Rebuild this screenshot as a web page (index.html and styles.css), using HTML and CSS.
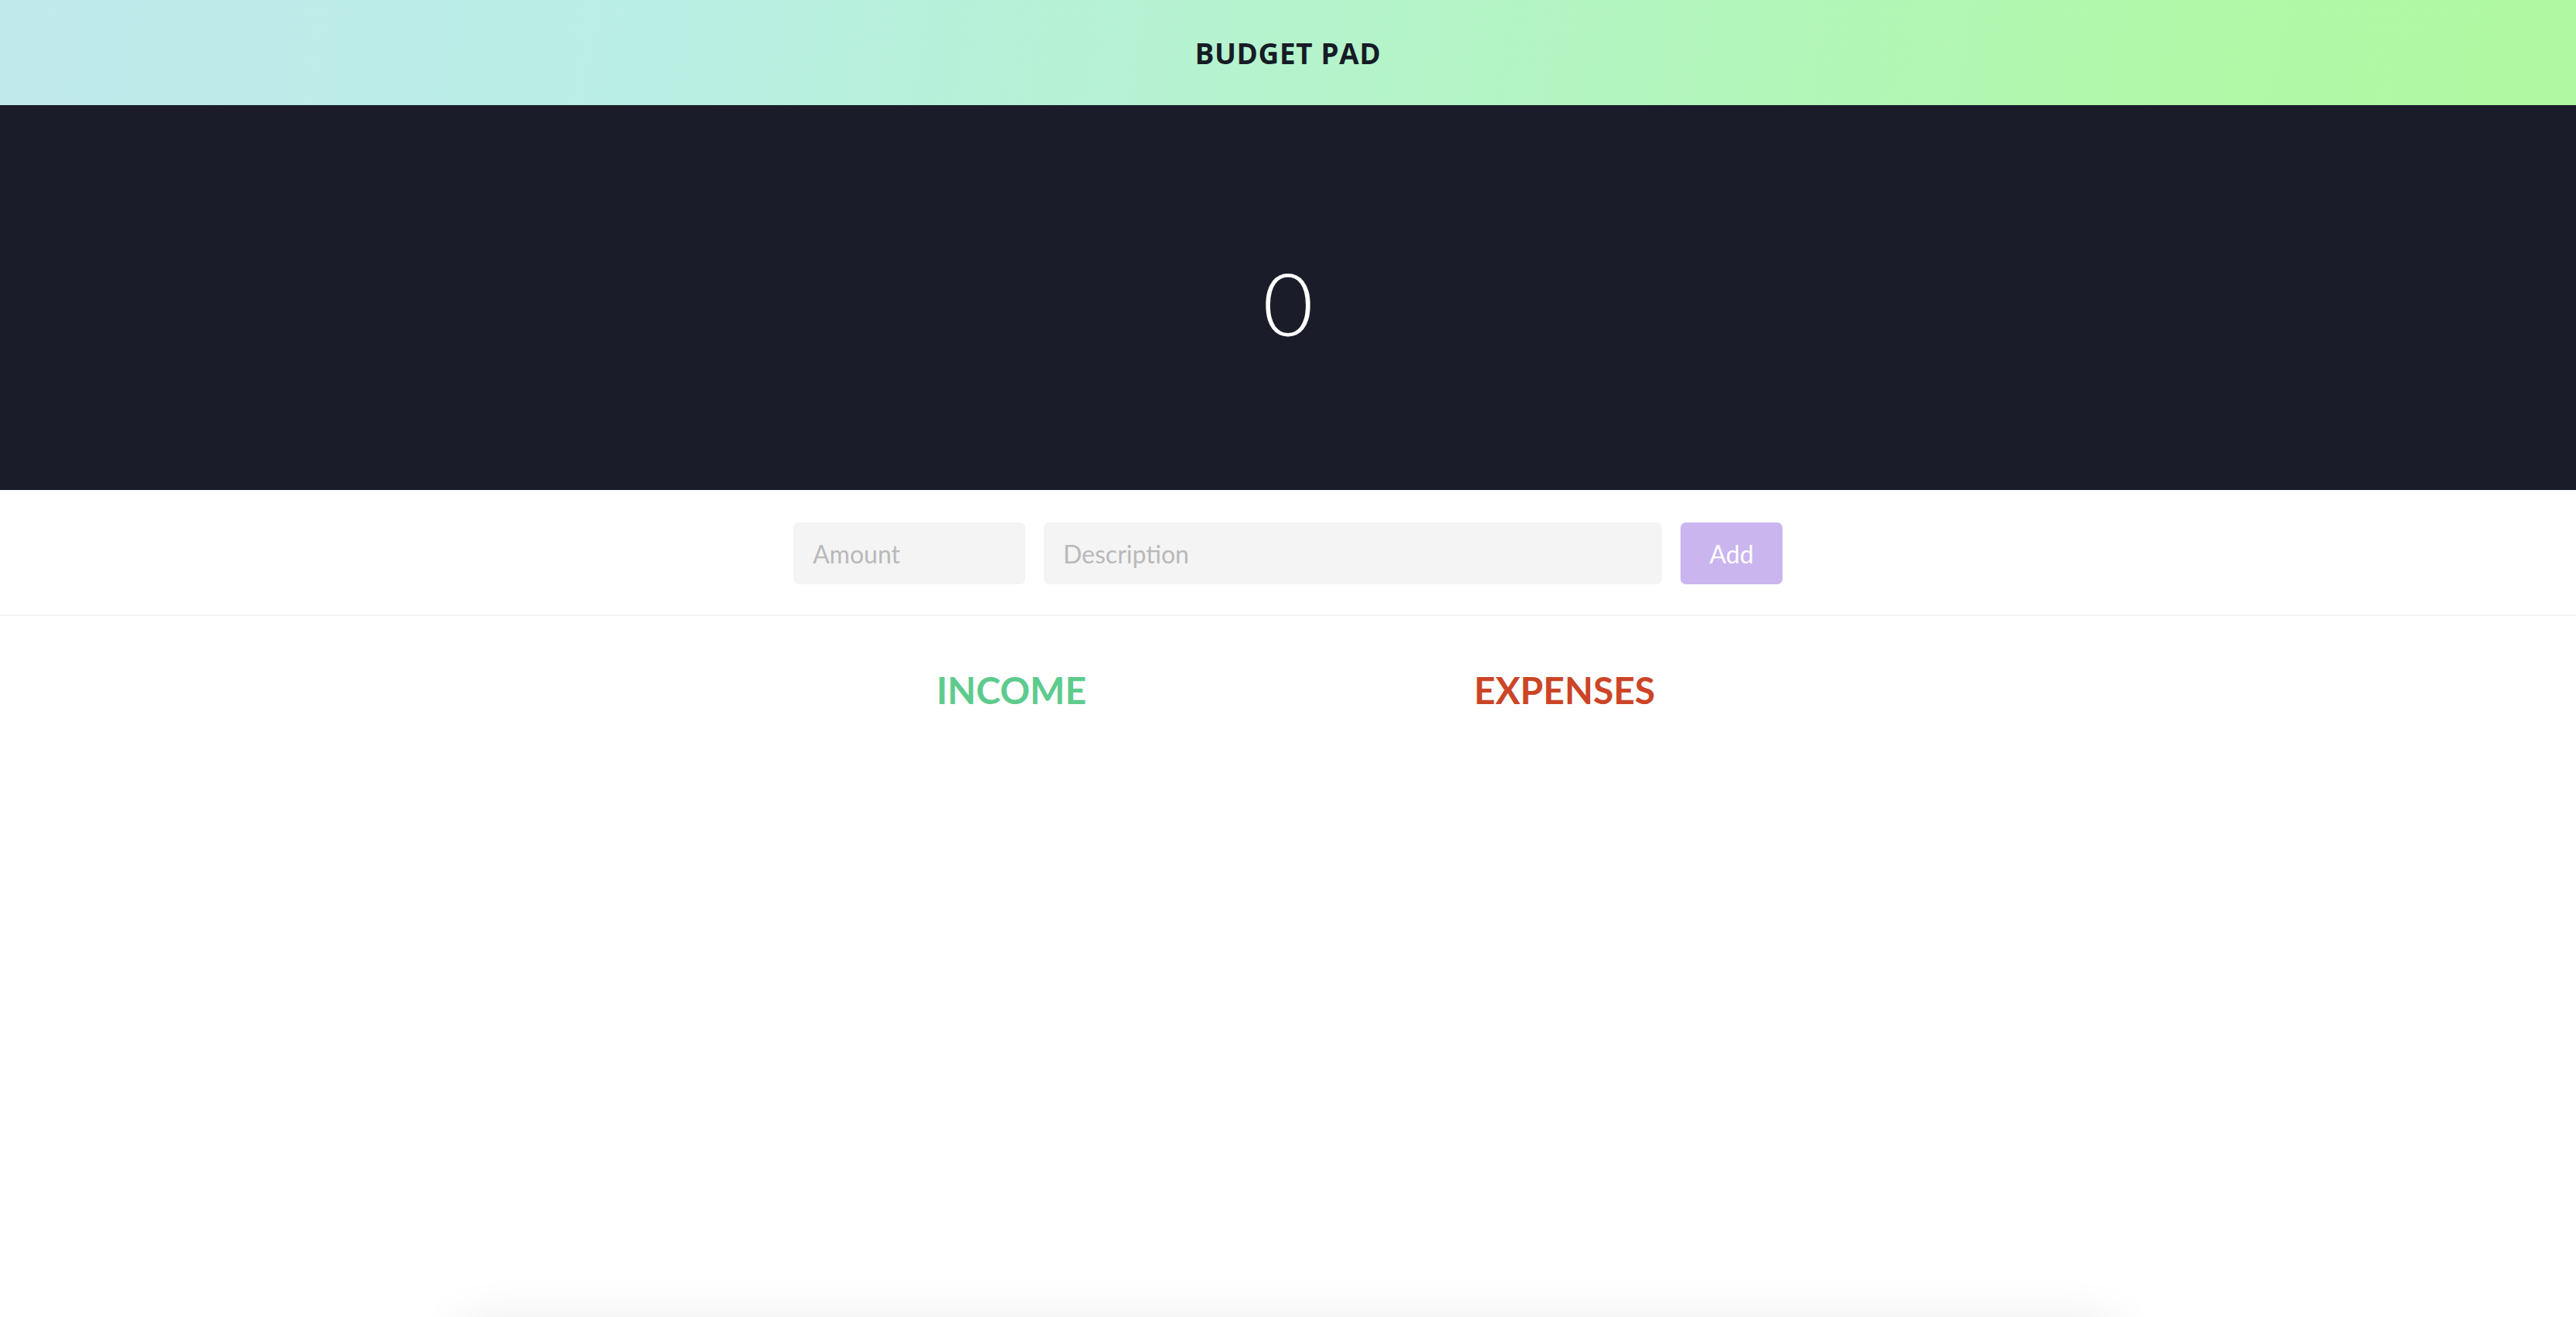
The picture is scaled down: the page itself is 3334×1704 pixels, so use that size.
FILE: index.html
```html
<!DOCTYPE html>
<html lang="en">
<head>
<meta charset="utf-8">
<title>Budget Pad</title>
<link rel="stylesheet" href="styles.css">
</head>
<body>
<header class="topbar">
  <h1 class="brand">BUDGET PAD</h1>
</header>
<section class="balance">
  <div class="balance-value">0</div>
</section>
<section class="entry">
  <form class="entry-form">
    <input class="field field-amount" type="text" placeholder="Amount">
    <input class="field field-desc" type="text" placeholder="Description">
    <button class="add-btn" type="button">Add</button>
  </form>
</section>
<main class="lists">
  <div class="list-col">
    <h2 class="list-title income">INCOME</h2>
  </div>
  <div class="list-col">
    <h2 class="list-title expenses">EXPENSES</h2>
  </div>
</main>
<div class="card"></div>
</body>
</html>
```

FILE: styles.css
```css
html, body {
  margin: 0;
  padding: 0;
  background: #ffffff;
}

body {
  font-family: "Lato", "Open Sans", sans-serif;
  overflow: hidden;
}

.topbar {
  height: 136px;
  display: flex;
  align-items: center;
  justify-content: center;
  background: linear-gradient(100deg, #c0e9ec 0%, #b9eee5 25%, #b4f4c8 55%, #b1f8a8 85%, #b0f9a1 100%);
}

.brand {
  margin: 0;
  font-family: "Open Sans", sans-serif;
  font-weight: 700;
  font-size: 37px;
  letter-spacing: 0.6px;
  color: #161c26;
}

.balance {
  height: 498px;
  background: #1a1d29;
  display: flex;
  align-items: center;
  justify-content: center;
}

.balance-value {
  font-family: "Lato", sans-serif;
  font-weight: 300;
  font-size: 113px;
  line-height: 1;
  color: #ffffff;
  padding-top: 12px;
}

.entry {
  padding: 42px 0 39px;
  border-bottom: 2px solid #f2f2f2;
}

.entry-form {
  width: 1280px;
  margin: 0 auto;
  display: flex;
  gap: 24px;
}

.field {
  height: 80px;
  box-sizing: border-box;
  border: none;
  border-radius: 7px;
  background: #f4f4f4;
  padding: 0 25px;
  font-family: "Lato", sans-serif;
  font-size: 32px;
  color: #444;
  outline: none;
}

.field::placeholder {
  color: #b9b9b9;
}

.field-amount {
  width: 300px;
}

.field-desc {
  flex: 1;
}

.add-btn {
  width: 132px;
  height: 80px;
  border: none;
  border-radius: 7px;
  background: #cab5ef;
  color: #ffffff;
  font-family: "Lato", sans-serif;
  font-size: 32px;
}

.lists {
  width: 1432px;
  margin: 0 auto;
  display: grid;
  grid-template-columns: 1fr 1fr;
  padding-top: 67px;
  height: 846px;
  box-sizing: border-box;
}

.list-col {
  text-align: center;
}

.list-title {
  margin: 0;
  font-family: "Lato", sans-serif;
  font-weight: 700;
  font-size: 48px;
  line-height: normal;
}

.income {
  color: #5dcb8d;
}

.expenses {
  color: #cb4526;
}

.card {
  width: 64%;
  height: 400px;
  margin: 76px auto 0;
  background: #ffffff;
  box-shadow: 0 0 64px rgba(0, 0, 0, 0.12);
}
```
